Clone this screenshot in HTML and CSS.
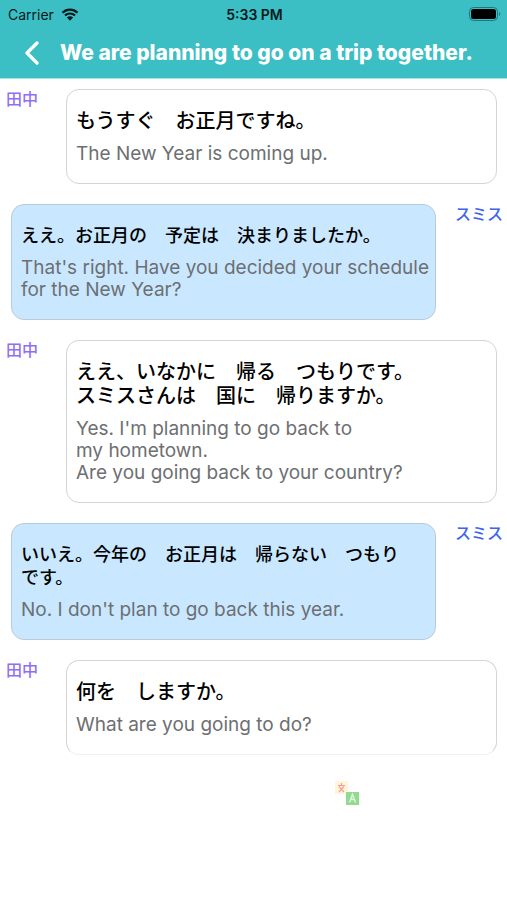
FILE: index.html
```
<!DOCTYPE html>
<html lang="ja">
<head>
  <meta charset="UTF-8" />
  <meta name="viewport" content="width=device-width, initial-scale=1.0"/>
  <title>We are planning to go on a trip together.</title>
  <link rel="stylesheet" href="styles.css">
</head>
<body>

  <header>
    <div class="status-bar">
      <div class="carrier">
        <span>Carrier</span>
        <svg width="18" height="13" viewBox="0 0 18 13" aria-hidden="true">
          <path d="M1.5 4.8a10.6 10.6 0 0 1 15 0M4 7.6a7 7 0 0 1 10 0" fill="none" stroke="#04191b" stroke-width="2.2"/>
          <path d="M5.9 9.5a4.4 4.4 0 0 1 6.2 0L9 12.7z" fill="#04191b"/>
        </svg>
      </div>
      <div class="time">5:33 PM</div>
      <div class="battery">
        <svg width="32" height="14" viewBox="0 0 32 14" aria-hidden="true">
          <rect x="0.5" y="0.5" width="28" height="13" rx="4" fill="none" stroke="#23777a"/>
          <rect x="2" y="2" width="25" height="10" rx="2.5" fill="#000"/>
          <path d="M30 5c1.6 .6 1.6 3.400 0 4z" fill="#23777a"/>
        </svg>
      </div>
    </div>
    <div class="title-bar">
      <button class="back" aria-label="Back">
        <svg width="16" height="24" viewBox="0 0 16 24">
          <path d="M13 2L3 12L13 22" fill="none" stroke="#fff" stroke-width="3.2" stroke-linecap="round" stroke-linejoin="round"/>
        </svg>
      </button>
      <h1>We are planning to go on a trip together.</h1>
    </div>
  </header>

  <main>
    <section class="message tanaka">
      <div class="speaker">田中</div>
      <div class="bubble">
        <p class="japanese">もうすぐ　お正月ですね。</p>
        <p class="english" lang="en">The New Year is coming up.</p>
      </div>
    </section>

    <section class="message smith">
      <div class="speaker">スミス</div>
      <div class="bubble">
        <p class="japanese">ええ。お正月の　予定は　決まりましたか。</p>
        <p class="english" lang="en">That's right. Have you decided your schedule<br>for the New Year?</p>
      </div>
    </section>

    <section class="message tanaka">
      <div class="speaker">田中</div>
      <div class="bubble">
        <p class="japanese">ええ、いなかに　帰る　つもりです。<br>スミスさんは　国に　帰りますか。</p>
        <p class="english" lang="en">Yes. I'm planning to go back to<br>my hometown.<br>Are you going back to your country?</p>
      </div>
    </section>

    <section class="message smith">
      <div class="speaker">スミス</div>
      <div class="bubble">
        <p class="japanese">いいえ。今年の　お正月は　帰らない　つもり<br>です。</p>
        <p class="english" lang="en">No. I don't plan to go back this year.</p>
      </div>
    </section>

    <section class="message tanaka last">
      <div class="speaker">田中</div>
      <div class="bubble">
        <p class="japanese">何を　しますか。</p>
        <p class="english" lang="en">What are you going to do?</p>
      </div>
    </section>
  </main>

  <footer>
    <button class="translate" aria-label="Translate">
      <svg width="26" height="26" viewBox="0 0 26 26">
        <rect x="1" y="1" width="13" height="13" fill="#fff4dc"/>
        <path d="M7.5 3v2M4 5.5h7M5 6.5l5 5.5M10 6.5l-5 5.5" fill="none" stroke="#f5a08f" stroke-width="1.2"/>
        <rect x="12" y="12" width="13" height="13" fill="#93da91"/>
        <path d="M15.5 22.5L18.5 14.5L21.5 22.5M16.5 19.5h4" fill="none" stroke="#dcf5d8" stroke-width="1.5"/>
      </svg>
    </button>
  </footer>

</body>
</html>
```
FILE: styles.css
```
* {
  box-sizing: border-box;
}

body {
  font-family: Inter, "Noto Sans CJK JP", sans-serif;
  background-color: #fff;
  margin: 0;
}

header {
  background-color: #3bbfc4;
  border-bottom: 1px solid #a5e4e6;
}

.status-bar {
  display: grid;
  grid-template-columns: 1fr auto 1fr;
  align-items: center;
  height: 28px;
  padding: 0 6px 0 8px;
  color: #04191b;
  font-size: 14px;
}

.carrier {
  display: flex;
  align-items: center;
  gap: 7px;
}

.time {
  font-weight: 600;
}

.battery {
  display: flex;
  justify-content: flex-end;
}

.title-bar {
  display: flex;
  align-items: center;
  height: 50px;
  padding-left: 18px;
}

button {
  display: flex;
  background: none;
  border: none;
  cursor: pointer;
}

.back {
  padding: 6px;
}

h1 {
  flex: 1;
  margin: 0;
  padding-left: 14px;
  color: #fff;
  font-size: 21px;
  font-weight: 800;
  line-height: 24px;
  white-space: nowrap;
}

main {
  display: flex;
  flex-direction: column;
  gap: 20px;
  padding-top: 10px;
}

.message {
  display: flex;
  align-items: flex-start;
}

.smith {
  flex-direction: row-reverse;
}

.speaker {
  flex: none;
  font-size: 16px;
  font-weight: 500;
  line-height: 20px;
}

.tanaka .speaker {
  width: 66px;
  padding-left: 6px;
  color: #8f70f5;
}

.smith .speaker {
  width: 71px;
  padding-left: 19px;
  color: #3d63f0;
}

.bubble {
  flex: 1;
  min-width: 0;
  padding: 18px 0 18px 9px;
  border: 1px solid #d5d5d9;
  border-radius: 13px;
}

.tanaka .bubble {
  margin-right: 10px;
}

.smith .bubble {
  margin-left: 11px;
  background-color: #c9e8ff;
  border-color: #b9cbd8;
}

.last .bubble {
  border-bottom-color: #f0f0f0;
}

p {
  margin: 0;
}

.japanese {
  margin-bottom: 11px;
  color: #000;
  font-family: "Noto Sans CJK JP", sans-serif;
  font-size: 20px;
  font-weight: 500;
  line-height: 24px;
}

.smith .japanese {
  font-size: 18px;
  line-height: 23px;
}

.english {
  color: #6d6f72;
  font-size: 19px;
  line-height: 22px;
}

footer {
  display: flex;
  justify-content: center;
  padding: 25px 0 25px 187px;
}

.translate {
  padding: 0;
}
```
